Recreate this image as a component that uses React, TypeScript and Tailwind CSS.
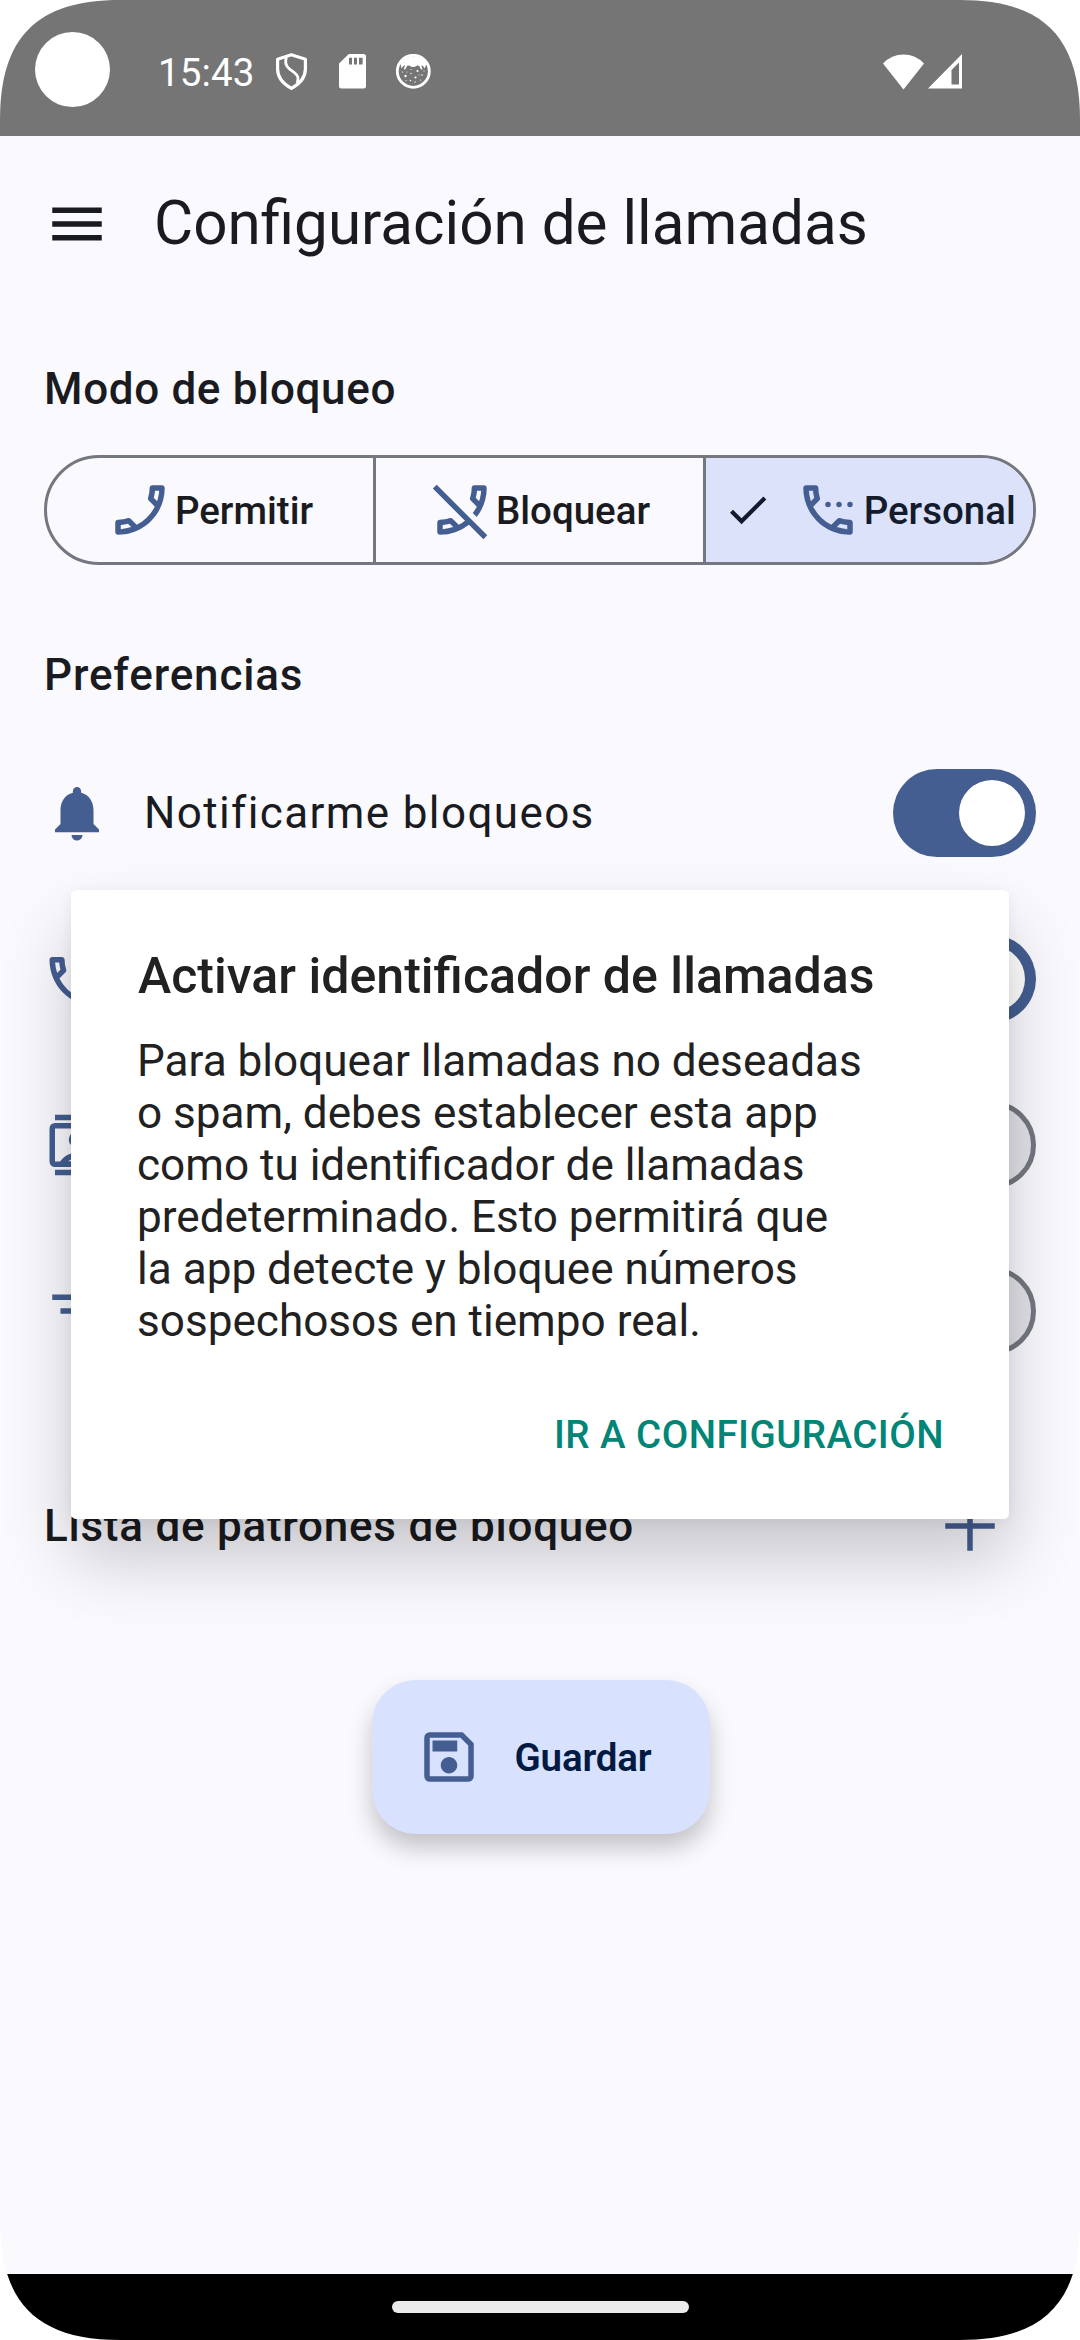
import type { ReactNode } from 'react';
import { MdCheck, MdFilterList, MdMenu, MdNotifications, MdOutlineCall, MdOutlinePhoneDisabled, MdOutlineSave } from 'react-icons/md';

function StatusBar() {
  return (
    <div className="flex h-[136px] shrink-0 bg-[#757575] text-white">
      <div className="mt-8 ml-[35px] size-[75px] rounded-full bg-white" />
      <div className="mt-[50px] ml-[48px] h-[46px] w-[96px] text-[38.5px] leading-[46px] tracking-[0.1px]">15:43</div>
      <svg className="mt-[52px] ml-[20px] h-[39px] w-[35px]" viewBox="0 0 35 39" fill="none" stroke="white" strokeLinejoin="round">
        <path d="M17.400 2.800 31.400 7.200V17c0 8.500-5 14.500-14 19.400C8.500 31.500 3.600 25.500 3.600 17V7.200Z" strokeWidth="3.200" />
        <path d="M12.500 5c-2 5-1.200 8.500 3 12 5 4 8 5 8.500 9 .2 2-.2 3.500-1 5" strokeWidth="2.800" />
      </svg>
      <svg className="mt-[54px] ml-[30px] h-[35px] w-[27px]" viewBox="0 0 27 35" fill="white">
        <path fillRule="evenodd" d="M9.800 0H24.500A2.500 2.500 0 0 1 27 2.500V32a2.500 2.500 0 0 1-2.500 2.500H2.500A2.500 2.500 0 0 1 0 32V9.500ZM10 3.800v6.600h3V3.800Zm5 0v6.600h3V3.800Zm5 0v6.600h3.600V3.800Z" />
      </svg>
      <svg className="mt-[54px] ml-[30px] size-[35px]" viewBox="0 0 35 35">
        <circle cx="17.300" cy="17.300" r="16" fill="none" stroke="white" strokeWidth="2.800" />
        <path fill="white" d="M4.500 10C8 0 27 0 30.500 10l-1.800 4.500-1.700-2.500-1.700-.7 1.200 4.200-1.600-.3-1.700-3.400-2.200-.4c-2.500 2-5.200 2-7.700 0l-2.200.4-1.700 3.400-1.600.3 1.200-4.200-1.700.7-1.700 2.500Z" />
        <g fill="white">
          <circle cx="9.500" cy="22" r="1.200" /><circle cx="15" cy="19.500" r=".7" /><circle cx="21.500" cy="17" r="1.100" />
          <circle cx="19.500" cy="23.500" r="1.100" /><circle cx="26" cy="21" r=".8" /><circle cx="14.500" cy="26.500" r=".8" />
          <circle cx="6.500" cy="18" r=".6" /><circle cx="24.500" cy="26" r=".6" /><circle cx="15" cy="15.500" r=".6" />
          <circle cx="11" cy="18" r=".5" /><circle cx="19" cy="28" r=".7" /><circle cx="28" cy="17" r=".6" />
          <circle cx="10" cy="26.500" r=".6" /><circle cx="23" cy="21" r=".5" />
        </g>
      </svg>
      <svg className="mt-[53px] mr-[4px] ml-auto h-[37px] w-[41px]" viewBox="0 0 41 37" fill="white">
        <path d="M0 10.500Q8.500 1.500 20.500 1.500T41 10.500L20.500 36.500Z" />
      </svg>
      <svg className="mt-[53px] mr-[118px] h-[37px] w-[34px]" viewBox="0 0 34 37" fill="white">
        <path fillRule="evenodd" d="M34 1V35.500H0ZM31 9.500 23.500 17v14.500H31Z" />
      </svg>
    </div>
  );
}

function CallIcon({ flipped = false }: { flipped?: boolean }) {
  return <MdOutlineCall className={flipped ? 'size-[66px] -scale-x-100 text-[#445e91]' : 'size-[66px] text-[#445e91]'} />;
}

function SettingsPhoneIcon() {
  return (
    <svg className="size-[66px] text-[#445e91]" viewBox="0 0 24 24" fill="currentColor">
      <MdOutlineCall size={24} />
      <circle cx="12" cy="10" r="1" />
      <circle cx="16" cy="10" r="1" />
      <circle cx="20" cy="10" r="1" />
    </svg>
  );
}

function IncomingCallIcon() {
  return (
    <svg className="size-[66px]" viewBox="0 0 24 24" fill="currentColor">
      <g transform="translate(-1 1)">
        <MdOutlineCall size={24} />
      </g>
    </svg>
  );
}

function ContactsIcon() {
  return (
    <svg className="size-[66px]" viewBox="0 0 24 24" fill="currentColor">
      <path d="M4 1h16v2H4zM4 21h16v2H4z" />
      <path fillRule="evenodd" d="M4 4h16a2 2 0 0 1 2 2v12a2 2 0 0 1-2 2H4a2 2 0 0 1-2-2V6a2 2 0 0 1 2-2Zm0 2v12h16V6Z" />
      <path fillRule="evenodd" d="M12 7a3 3 0 1 1 0 6 3 3 0 0 1 0-6Zm0 2a1 1 0 1 0 0 2 1 1 0 0 0 0-2Z" />
      <path fillRule="evenodd" d="M5.600 18.500C7 16 9.300 14.800 12 14.800s5 1.200 6.400 3.700Zm3-.5h6.800c-1-.7-2.200-1.100-3.400-1.100s-2.400.4-3.400 1.100Z" />
    </svg>
  );
}

function Switch({ on }: { on: boolean }) {
  return on ? (
    <div className="flex h-[88px] w-[143px] items-center justify-end rounded-full bg-[#445e91] pr-[11px]">
      <div className="size-[66px] rounded-full bg-white" />
    </div>
  ) : (
    <div className="flex h-[88px] w-[143px] items-center rounded-full border-[5.5px] border-[#757780] bg-[#e2e2e9] pl-[16px]">
      <div className="size-[44px] rounded-full bg-[#757780]" />
    </div>
  );
}

function PreferenceRow({ icon, label, on }: { icon: ReactNode; label?: string; on: boolean }) {
  return (
    <div className="flex h-[166px] items-center">
      <div className="size-[66px] text-[#445e91]">{icon}</div>
      {label && <span className="ml-[34px] text-[44px] leading-[66px] tracking-[1.375px]">{label}</span>}
      <div className="ml-auto">
        <Switch on={on} />
      </div>
    </div>
  );
}

function Dialog() {
  return (
    <div
      role="dialog"
      className="absolute top-[890px] left-[71px] flex h-[629px] w-[938px] flex-col rounded-[5.5px] bg-white pt-[53px] pl-[66px] text-[#212121] shadow-[0_40px_70px_rgba(0,0,0,0.2),0_2px_14px_rgba(0,0,0,0.06)]"
    >
      <h3 className="ml-px h-[66px] text-[50.1px] leading-[66px] font-medium whitespace-nowrap">
        Activar identificador de llamadas
      </h3>
      <p className="mt-[26px] text-[44.1px] leading-[52px] whitespace-nowrap">
        Para bloquear llamadas no deseadas<br />
        o spam, debes establecer esta app<br />
        como tu identificador de llamadas<br />
        predeterminado. Esto permitirá que<br />
        la app detecte y bloquee números<br />
        sospechosos en tiempo real.
      </p>
      <button className="mt-[55px] mr-[65px] self-end text-[38.5px] leading-[66px] font-medium tracking-[0.47px] whitespace-nowrap text-[#008577]">
        IR A CONFIGURACIÓN
      </button>
    </div>
  );
}

export default function App() {
  return (
    <div className="h-[2340px] w-[1080px] overflow-hidden bg-white">
      <div className="relative flex h-[2340px] w-[1080px] flex-col bg-[#f9f9fe] font-[Roboto,sans-serif] text-[#1a1b20] [clip-path:path('M0_120C0_37_37_0_120_0H960C1043_0_1080_37_1080_120V2220C1080_2303_1043_2340_960_2340H120C37_2340_0_2303_0_2220Z')]">
        <StatusBar />
        <header className="flex h-[176px] items-center pl-[44px]">
          <MdMenu className="size-[66px]" />
          <h1 className="-mt-px ml-[44px] text-[60.2px] leading-[77px] whitespace-nowrap">Configuración de llamadas</h1>
        </header>
        <main className="flex flex-col px-[44px] pt-[44px]">
          <h2 className="text-[44px] leading-[66px] font-medium tracking-[0.65px]">Modo de bloqueo</h2>
          <div className="mt-[33px] flex h-[110px] overflow-hidden rounded-full border-[3px] border-[#757780] text-[38.5px] leading-[55px] font-medium">
            <div className="flex w-[329px] items-center justify-center border-r-[3px] border-[#757780]">
              <CallIcon flipped />
              <span className="ml-[2px]">Permitir</span>
            </div>
            <div className="flex w-[330px] items-center justify-center border-r-[3px] border-[#757780]">
              <MdOutlinePhoneDisabled className="size-[66px] text-[#445e91]" />
              <span className="ml-px">Bloquear</span>
            </div>
            <div className="flex flex-1 items-center justify-center bg-[#dbe2f9] text-[#141b2c]">
              <MdCheck className="mr-[22px] size-[49.5px]" />
              <SettingsPhoneIcon />
              <span className="ml-[3px]">Personal</span>
            </div>
          </div>
          <h2 className="mt-[77px] text-[44px] leading-[66px] font-medium tracking-[0.85px]">Preferencias</h2>
          <div className="mt-[22px] flex flex-col">
            <PreferenceRow icon={<MdNotifications className="size-[66px]" />} label="Notificarme bloqueos" on />
            <PreferenceRow icon={<IncomingCallIcon />} on />
            <PreferenceRow icon={<ContactsIcon />} on={false} />
            <PreferenceRow icon={<MdFilterList className="size-[66px]" />} on={false} />
          </div>
          <div className="mt-[99px] flex items-center justify-between pr-[33px]">
            <h2 className="text-[44px] leading-[66px] font-medium tracking-[0.75px]">Lista de patrones de bloqueo</h2>
            <svg className="size-[66px] text-[#445e91]" viewBox="0 0 24 24" fill="currentColor">
              <path d="M11 3h2v8h8v2h-8v8h-2v-8H3v-2h8Z" />
            </svg>
          </div>
          <button className="mt-[121px] ml-px flex h-[154px] w-[338px] items-center self-center rounded-[44px] bg-[#d8e2ff] pl-[44px] text-[38.5px] leading-[55px] font-semibold tracking-[-0.15px] text-[#001a41] shadow-[0_14px_24px_rgba(0,0,0,0.22)]">
            <MdOutlineSave className="size-[66px] text-[#445e91]" />
            <span className="ml-[33px]">Guardar</span>
          </button>
        </main>
        <div className="mt-auto flex h-[66px] shrink-0 justify-center bg-black pt-[27px]">
          <div className="h-[12px] w-[297px] rounded-full bg-[#ebebeb]" />
        </div>
        <Dialog />
      </div>
    </div>
  );
}
